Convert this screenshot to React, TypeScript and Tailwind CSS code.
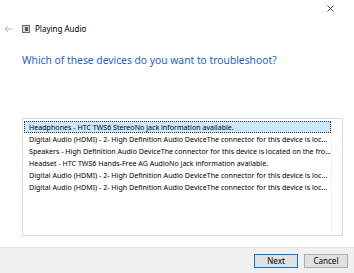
import React from "react";

const items = [
  "Headphones - HTC TWS6 StereoNo jack information available.",
  "Digital Audio (HDMI) - 2- High Definition Audio DeviceThe connector for this device is loc...",
  "Speakers - High Definition Audio DeviceThe connector for this device is located on the fro...",
  "Headset - HTC TWS6 Hands-Free AG AudioNo jack information available.",
  "Digital Audio (HDMI) - 2- High Definition Audio DeviceThe connector for this device is loc...",
  "Digital Audio (HDMI) - 2- High Definition Audio DeviceThe connector for this device is loc...",
];

export default function App() {
  return (
    <div
      className="w-[354px] h-[273px] bg-white flex flex-col overflow-hidden"
      style={{ fontFamily: '"Noto Sans", "Open Sans", sans-serif' }}
    >
      <div className="h-[17px] flex justify-end items-start pr-[20px] pt-[5px]">
        <svg width="7" height="7" viewBox="0 0 7 7">
          <path d="M0.5 0.5 L6.5 6.5 M6.5 0.5 L0.5 6.5" stroke="#333" strokeWidth="0.9" />
        </svg>
      </div>
      <div className="flex items-center h-[23px] pl-[4px]">
        <svg width="9" height="8" viewBox="0 0 9 8" className="mr-[9px]">
          <path d="M8.5 4 H1 M4 1 L1 4 L4 7" stroke="#b0b0b0" strokeWidth="0.9" fill="none" />
        </svg>
        <div className="w-[8px] h-[8px] border border-[#6b6b6b] bg-[#d6d6d6] flex items-center justify-center mr-[5px]">
          <div className="w-[3px] h-[4px] bg-[#555]" />
        </div>
        <span className="text-[8px] text-black leading-none">Playing Audio</span>
      </div>
      <div className="pl-[22px] pt-[15px] h-[78px]">
        <div className="text-[10.3px] text-[#1f5fc4] leading-none">
          Which of these devices do you want to troubleshoot?
        </div>
      </div>
      <div className="ml-[22px] mr-[11px] h-[118px] border border-[#dadada] flex">
        <div className="w-[309px] border-r border-[#eef1f6] pt-[2px] pl-[1px]">
          {items.map((t, i) => (
            <div
              key={i}
              className={
                i === 0
                  ? "h-[12px] flex items-center pl-[4px] bg-[#cce8ff] border border-dotted border-[#333] text-[7.1px] text-black whitespace-nowrap overflow-hidden"
                  : "h-[12px] flex items-center pl-[5px] text-[7.1px] text-black whitespace-nowrap overflow-hidden"
              }
            >
              {t}
            </div>
          ))}
        </div>
      </div>
      <div className="flex-1" />
      <div className="h-[26px] bg-[#f0f0f0] border-t border-[#e3e3e3] flex items-center justify-end gap-[6px] pr-[6px]">
        <button className="w-[44px] h-[14px] bg-[#e1e1e1] border border-[#0078d7] text-[8px] text-black leading-none flex items-center justify-center">
          Next
        </button>
        <button className="w-[44px] h-[14px] bg-[#e1e1e1] border border-[#adadad] text-[8px] text-black leading-none flex items-center justify-center">
          Cancel
        </button>
      </div>
    </div>
  );
}
